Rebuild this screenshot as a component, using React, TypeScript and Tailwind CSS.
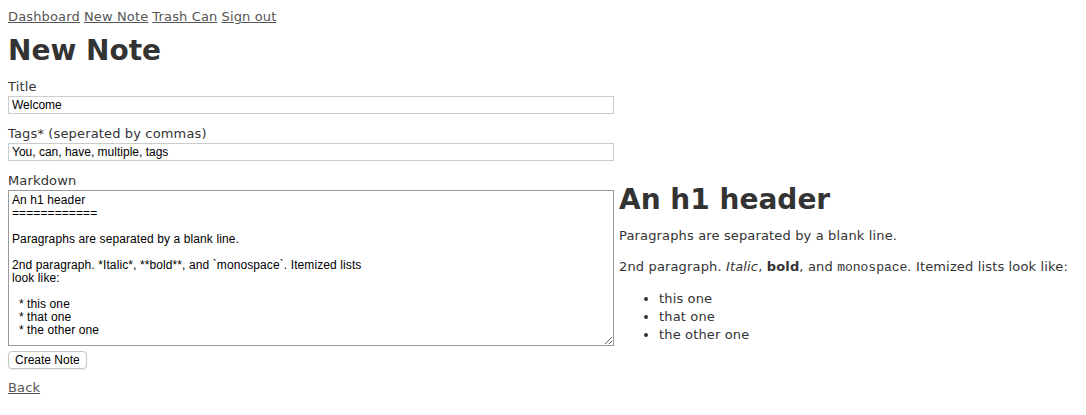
import React from "react";

const markdown = `An h1 header
============

Paragraphs are separated by a blank line.

2nd paragraph. *Italic*, **bold**, and \`monospace\`. Itemized lists
look like:

  * this one
  * that one
  * the other one`;

const App: React.FC = () => {
  return (
    <div className="p-2 text-[13px] leading-[18px] tracking-[0.15px] text-[#333] font-['DejaVu_Sans',Verdana,sans-serif]">
      {/* nav */}
      <nav className="flex gap-[4px] text-[#555]">
        <a href="#" className="underline">Dashboard</a>
        <a href="#" className="underline">New Note</a>
        <a href="#" className="underline">Trash Can</a>
        <a href="#" className="underline">Sign out</a>
      </nav>

      <h1 className="mt-[9px] text-[28px] leading-[32px] font-bold tracking-normal">New Note</h1>

      <form className="mt-[11px]">
        <label className="block">Title</label>
        <input
          defaultValue="Welcome"
          className="block w-[606px] h-[18px] border border-[#ccc] px-[3px] text-[12px] tracking-normal text-black font-['Liberation_Sans',Arial,sans-serif] outline-none"
        />

        <label className="block mt-[11px]">Tags* (seperated by commas)</label>
        <input
          defaultValue="You, can, have, multiple, tags"
          className="block w-[606px] h-[18px] border border-[#ccc] px-[3px] text-[12px] tracking-normal text-black font-['Liberation_Sans',Arial,sans-serif] outline-none"
        />

        <label className="block mt-[11px]">Markdown</label>
        <div className="flex items-start gap-[5px]">
          <textarea
            defaultValue={markdown}
            className="block shrink-0 w-[606px] h-[156px] border border-[#999] px-[3px] pt-[3px] text-[12px] leading-[13px] tracking-[0.1px] text-black font-['Liberation_Sans',Arial,sans-serif] outline-none resize"
          />
          <div className="flex-1">
            <h2 className="text-[28px] leading-[18px] font-bold mt-[1px] tracking-normal">An h1 header</h2>
            <p className="mt-[18px]">Paragraphs are separated by a blank line.</p>
            <p className="mt-[13px]">
              2nd paragraph. <em>Italic</em>, <strong>bold</strong>, and{" "}
              <code className="font-[family-name:'Liberation_Mono',monospace] text-[13px] tracking-normal">monospace</code>. Itemized lists look like:
            </p>
            <ul className="mt-[13px] pl-[40px] list-disc">
              <li>this one</li>
              <li>that one</li>
              <li>the other one</li>
            </ul>
          </div>
        </div>

        <button
          type="button"
          className="mt-[5px] block h-[18px] px-[6px] rounded-[4px] border border-[#c5c5c5] bg-white text-[12px] leading-[16px] tracking-normal text-black font-['Liberation_Sans',Arial,sans-serif] shadow-[0_1px_1px_rgba(0,0,0,0.08)]"
        >
          Create Note
        </button>
      </form>

      <a href="#" className="block mt-[10px] underline text-[#555] w-fit">Back</a>
    </div>
  );
};

export default App;
